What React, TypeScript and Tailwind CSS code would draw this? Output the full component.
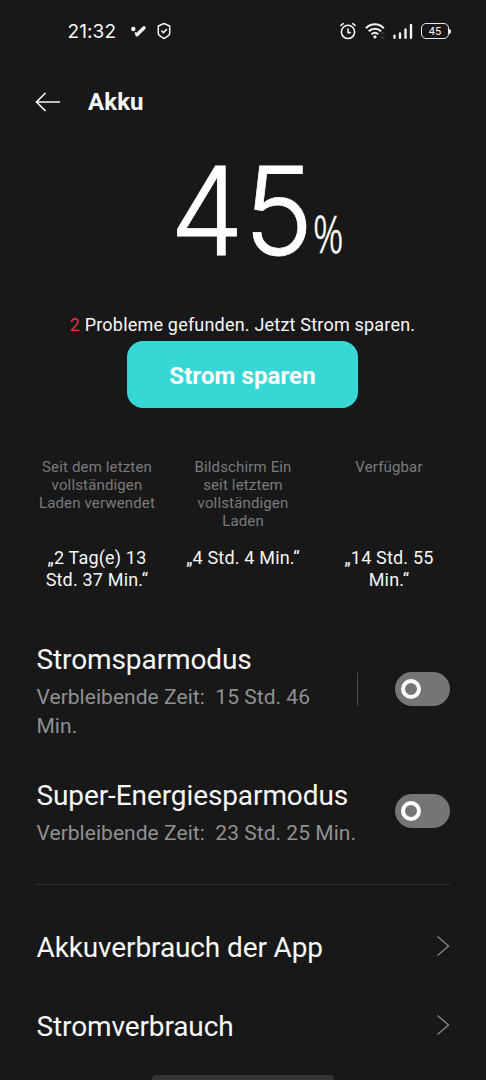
import type { ReactNode } from "react";

function AlarmIcon() {
  return (
    <svg width="18" height="18" viewBox="0 0 18 18" fill="none" stroke="#f2f2f2" strokeWidth="1.6" strokeLinecap="round">
      <circle cx="9" cy="9.9" r="6.6" />
      <path d="M9 7v3.600h2.300M2 3.400 4.200 1.700M16 3.400 13.800 1.700" />
    </svg>
  );
}

function WifiIcon() {
  return (
    <svg width="21" height="18" viewBox="0 0 21 18" fill="none" stroke="#f2f2f2" strokeWidth="2">
      <path d="M1 6.2C6 1 13.800 1 18.800 6.200M3.700 9.300c3.500-3.400 8.900-3.400 12.400 0M6.500 12.300c2-1.800 4.800-1.800 6.800 0" />
      <circle cx="9.900" cy="14.900" r="1.600" fill="#f2f2f2" stroke="none" />
      <path d="m16 12 1.700-1.700 1.700 1.700M16 14.500l1.700 1.700 1.700-1.700" stroke="#555" strokeWidth="1" />
    </svg>
  );
}

function SignalIcon() {
  return (
    <svg width="20" height="17" viewBox="0 0 20 17" stroke="#f2f2f2" strokeWidth="2.400" strokeLinecap="round">
      <path d="M1.500 12.800v1.900M7 10.500v4.200M12.500 6.500v8.200M18 2v12.700" />
    </svg>
  );
}

function ShieldIcon() {
  return (
    <svg width="14" height="18" viewBox="0 0 14 18" fill="none" stroke="#f2f2f2" strokeWidth="1.500" strokeLinejoin="round">
      <path d="M7 1.500 12.700 4v7.300c0 1.700-2.500 3.600-5.700 5.200-3.200-1.600-5.700-3.500-5.700-5.200V4Z" />
      <path d="m4.400 8.600 2 2 3.500-3.500" />
    </svg>
  );
}

function StatusBar() {
  return (
    <div className="flex h-[62px] shrink-0 items-center pl-[67.5px] pr-[35px]">
      <span className="w-[49px] whitespace-nowrap pt-px font-[Inter,sans-serif] text-[19px] leading-none font-normal tracking-[0.1px]">21:32</span>
      <svg className="ml-3.5" width="17" height="14" viewBox="0 0 17 14" fill="none" stroke="#f2f2f2" strokeLinecap="round">
        <path d="m6 10.700 7-6.900" strokeWidth="3.400" />
        <circle cx="2.300" cy="5" r="2.200" fill="#f2f2f2" stroke="none" />
        <path d="m4.600 9 1.200 1.700" strokeWidth="2" />
      </svg>
      <div className="ml-[9.5px]"><ShieldIcon /></div>
      <div className="ml-auto flex items-center">
        <AlarmIcon />
        <div className="ml-[8px]"><WifiIcon /></div>
        <div className="ml-[7px]"><SignalIcon /></div>
        <div className="ml-2 flex h-[16px] w-[28px] items-center justify-center rounded-[5px] border-[1.5px] border-[#e8e8e8] text-[11px] leading-none">
          45
        </div>
        <div className="h-[5px] w-[2px] rounded-r bg-[#e8e8e8]" />
      </div>
    </div>
  );
}

function Stat({ label, children }: { label: ReactNode; children: ReactNode }) {
  return (
    <div className="w-[146px] text-center">
      <div className="h-[89px] whitespace-nowrap text-[15px] leading-[18px] tracking-[0.15px] text-[#7a7a7a]">{label}</div>
      <div className="whitespace-nowrap text-[18px] leading-[22px] tracking-[0.18px] text-[#f5f5f5]">{children}</div>
    </div>
  );
}

function Toggle() {
  return (
    <button className="flex h-[34px] w-[55px] shrink-0 items-center rounded-full bg-[#757575] pl-1.5">
      <span className="size-5 rounded-full border-[4px] border-white" />
    </button>
  );
}

function LinkRow({ title }: { title: string }) {
  return (
    <div className="flex h-[79px] items-center justify-between">
      <span className="text-[28px] leading-8 tracking-[-0.12px]">{title}</span>
      <svg className="mb-[3px]" width="14" height="22" viewBox="0 0 14 22" fill="none" stroke="#808080" strokeWidth="1.500">
        <path d="m1.500 1.500 11 9.500-11 9.500" />
      </svg>
    </div>
  );
}

export default function App() {
  return (
    <div className="flex h-[1080px] w-[486px] flex-col overflow-hidden bg-[#181818] font-[Roboto,sans-serif] text-[#f8f8f8]">
      <StatusBar />
      <header className="flex h-[80px] shrink-0 items-center pl-[35px]">
        <svg width="26" height="20" viewBox="0 0 26 20" fill="none" stroke="#f2f2f2" strokeWidth="1.700">
          <path d="M10.500 1 1.500 10l9 9M1.500 10H25" />
        </svg>
        <h1 className="ml-[27px] text-[24px] leading-7 font-bold tracking-[0.1px]">Akku</h1>
      </header>

      <section className="flex h-[172px] shrink-0 items-baseline pl-[170px] font-[Inter,sans-serif] text-white">
        <span className="w-[143px] origin-left scale-x-[0.955] text-[123px] leading-[137px] font-light [-webkit-text-stroke:0.8px_white]">45</span>
        <span className="origin-bottom-left -translate-y-[2px] scale-x-[0.72] font-['Noto_Sans',sans-serif] text-[52px] leading-none font-light [-webkit-text-stroke:0.5px_white]">%</span>
      </section>

      <section className="flex shrink-0 flex-col items-center pr-px">
        <p className="h-[27px] whitespace-nowrap text-[18px] leading-[22px] tracking-[0.2px]">
          <span className="text-[#e0364b]">2</span> Probleme gefunden. Jetzt Strom sparen.
        </p>
        <button className="h-[67px] w-[231px] rounded-[16px] bg-[#38d7d5] pt-0.5 text-[24px] font-bold tracking-[0.1px] text-white">Strom sparen</button>
      </section>

      <section className="mt-[50px] flex shrink-0 justify-center">
        <Stat label={<>Seit dem letzten<br />vollständigen<br />Laden verwendet</>}>„2 Tag(e) 13<br />Std. 37 Min.“</Stat>
        <Stat label={<>Bildschirm Ein<br />seit letztem<br />vollständigen<br />Laden</>}>„4 Std. 4 Min.“</Stat>
        <Stat label="Verfügbar">„14 Std. 55<br />Min.“</Stat>
      </section>

      <section className="mx-[36px] mt-[53px] flex shrink-0 flex-col">
        <div className="flex h-[96px] items-center">
          <div className="w-[321px] pl-[0.5px]">
            <h2 className="text-[28px] leading-8 tracking-[-0.1px]">Stromsparmodus</h2>
            <p className="mt-[7px] whitespace-pre text-[21px] leading-[29px] tracking-[0.04px] text-[#909090]">{"Verbleibende Zeit:  15 Std. 46\nMin."}</p>
          </div>
          <span className="mb-[6px] h-[33px] w-px bg-[#4a4a4a]" />
          <div className="mb-[6px] ml-auto"><Toggle /></div>
        </div>
        <div className="mt-[40px] flex h-[68px] items-center justify-between">
          <div className="w-[321px] pl-[0.5px]">
            <h2 className="whitespace-nowrap text-[28px] leading-8 tracking-[-0.1px]">Super-Energiesparmodus</h2>
            <p className="mt-[7px] whitespace-pre text-[21px] leading-[29px] tracking-[0.04px] text-[#909090]">{"Verbleibende Zeit:  23 Std. 25 Min."}</p>
          </div>
          <div className="mb-[7px]"><Toggle /></div>
        </div>
        <hr className="mt-[36px] border-[#303030]" />
        <div className="mt-[23px] pl-[0.5px]">
          <LinkRow title="Akkuverbrauch der App" />
          <LinkRow title="Stromverbrauch" />
        </div>
      </section>
      <div className="mx-auto mt-auto h-[5px] w-[182px] shrink-0 rounded-t-sm bg-[#343434]" />
    </div>
  );
}
